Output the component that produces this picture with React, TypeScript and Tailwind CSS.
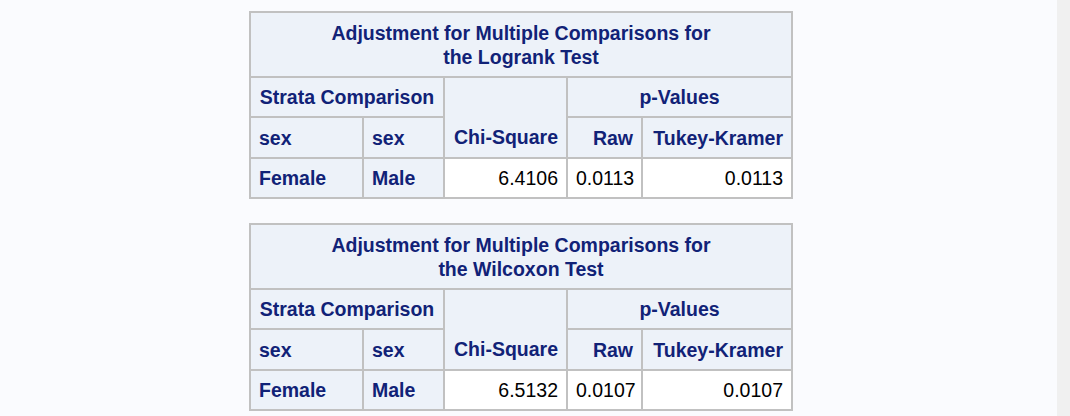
const tables = [
  { test: "Logrank", chi: "6.4106", raw: "0.0113", tukey: "0.0113" },
  { test: "Wilcoxon", chi: "6.5132", raw: "0.0107", tukey: "0.0107" },
];

const hd = "border-2 border-[#c1c1c1] bg-[#edf2f9] text-[#112277] font-bold px-[8px]";
const dt = "border-2 border-[#c1c1c1] bg-white text-black px-[8px] text-right";

function CompTable({ test, chi, raw, tukey }: { test: string; chi: string; raw: string; tukey: string }) {
  return (
    <table className="border-collapse table-fixed w-[542px] text-[19.5px] leading-[24px]">
      <colgroup>
        <col className="w-[113px]" />
        <col className="w-[81px]" />
        <col className="w-[123px]" />
        <col className="w-[75px]" />
        <col className="w-[150px]" />
      </colgroup>
      <thead>
        <tr className="h-[65px]">
          <th colSpan={5} className={`${hd} text-center`}>
            Adjustment for Multiple Comparisons for
            <br />
            the {test} Test
          </th>
        </tr>
        <tr className="h-[40px]">
          <th colSpan={2} className={`${hd} text-center`}>Strata Comparison</th>
          <th rowSpan={2} className={`${hd} text-right align-bottom pb-[8px] whitespace-nowrap`}>Chi-Square</th>
          <th colSpan={2} className={`${hd} text-center`}>p-Values</th>
        </tr>
        <tr className="h-[41px]">
          <th className={`${hd} text-left`}>sex</th>
          <th className={`${hd} text-left`}>sex</th>
          <th className={`${hd} text-right`}>Raw</th>
          <th className={`${hd} text-right whitespace-nowrap`}>Tukey-Kramer</th>
        </tr>
      </thead>
      <tbody>
        <tr className="h-[40px]">
          <th className={`${hd} text-left`}>Female</th>
          <th className={`${hd} text-left`}>Male</th>
          <td className={dt}>{chi}</td>
          <td className={dt}>{raw}</td>
          <td className={dt}>{tukey}</td>
        </tr>
      </tbody>
    </table>
  );
}

export default function App() {
  return (
    <div className="flex h-[416px] w-[1070px] overflow-hidden font-['Liberation_Sans',Arial,sans-serif]">
      <div className="flex-1 bg-[#fafbfe] pl-[249px] pt-[11px] flex flex-col gap-[24px]">
        {tables.map((t) => (
          <CompTable key={t.test} {...t} />
        ))}
      </div>
      <div className="w-[13px] bg-[#f0f0f0]"></div>
    </div>
  );
}
